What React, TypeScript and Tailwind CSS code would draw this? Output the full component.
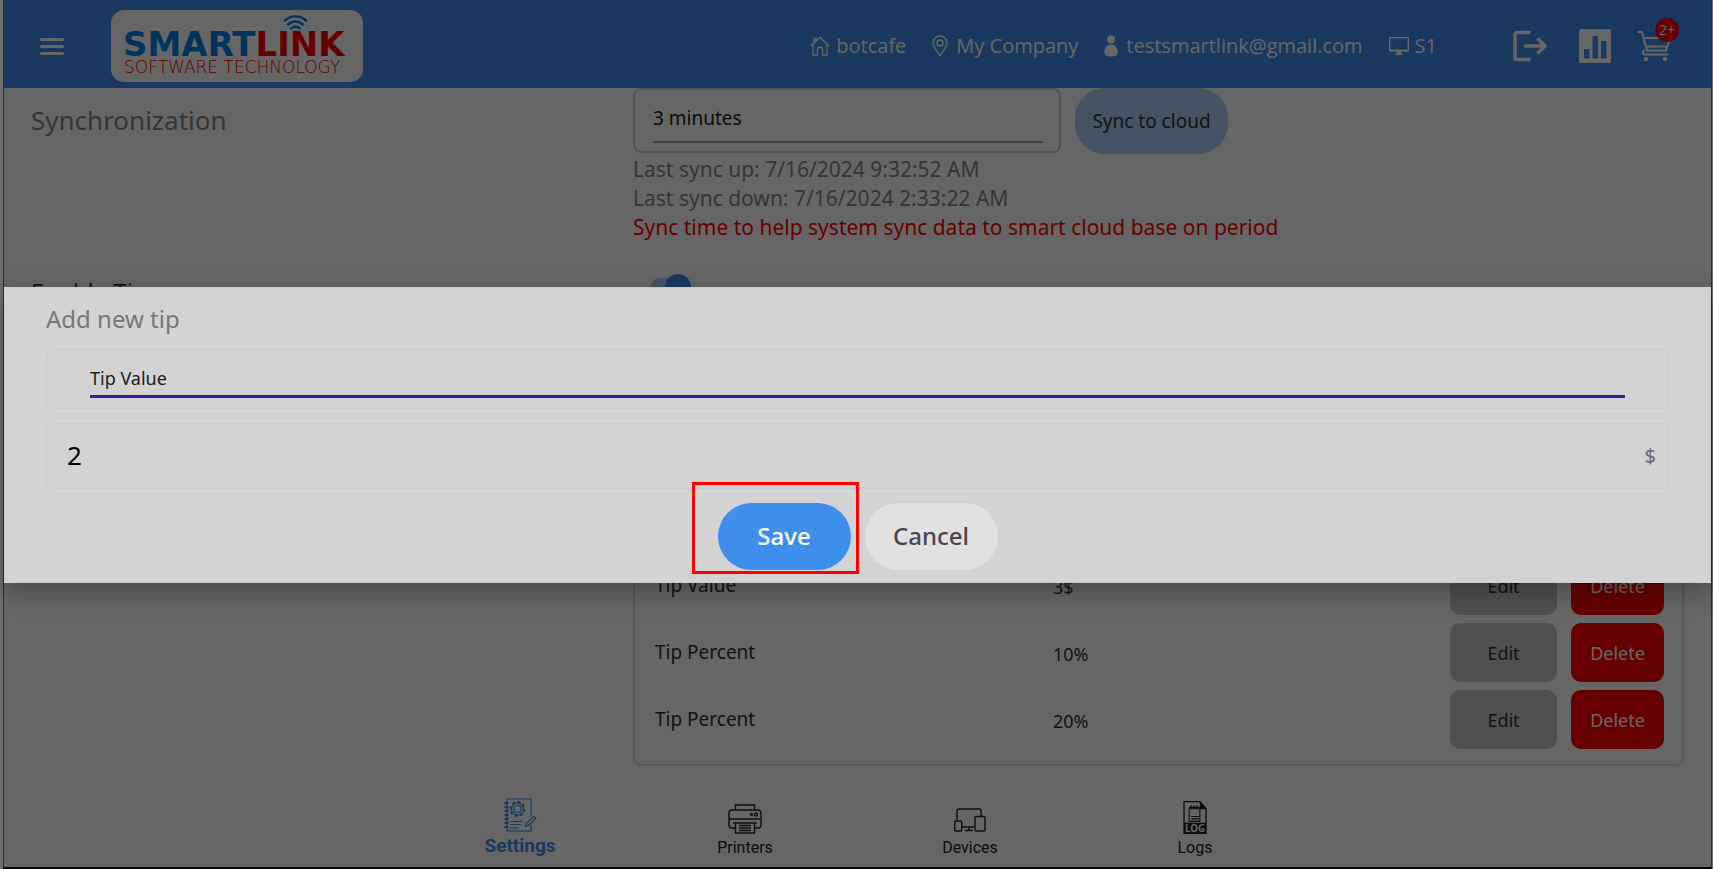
import React, { useState } from "react";

const tips = [
  { id: 1, type: "Tip Value", amount: "3$" },
  { id: 2, type: "Tip Percent", amount: "10%" },
  { id: 3, type: "Tip Percent", amount: "20%" },
];

const Logo = () => (
  <svg width="252" height="72" viewBox="0 0 252 72" role="img" aria-label="Smartlink Software Technology">
    <rect width="252" height="72" rx="13" fill="#fff" />
    <g fill="none" stroke="#0083e6" strokeWidth="2.4" strokeLinecap="round">
      <path d="M174 10.500c6-5.500 15-5.500 21 0" />
      <path d="M177 14.500c4.500-4 10.500-4 15 0" />
      <path d="M180 18.500c2.500-2.300 6.500-2.300 9 0" />
    </g>
    <text x="12" y="46" fontFamily="DejaVu Sans, sans-serif" fontWeight="700" fontSize="34" fill="#0083e6">
      SMART<tspan fill="#f00">LINK</tspan>
    </text>
    <text x="13" y="63" fontFamily="DejaVu Sans, sans-serif" fontWeight="200" fontSize="17" fill="#f00000">
      SOFTWARE TECHNOLOGY
    </text>
  </svg>
);

const HomeIcon = () => (
  <svg width="20" height="20" viewBox="0 0 20 20" fill="none" stroke="currentColor" strokeWidth="1.3">
    <path d="M.7 10 10 1.500l9.300 8.500M4 7V2.500h2V5M3 8.500V19h4.500v-5.500c0-3 5-3 5 0V19H17V8.500" />
  </svg>
);

const PinIcon = () => (
  <svg width="16" height="22" viewBox="0 0 16 22" fill="none" stroke="currentColor" strokeWidth="1.4">
    <path d="M8 20.500C4 15 1 11.500 1 8a7 7 0 0 1 14 0c0 3.500-3 7-7 12.500z" />
    <circle cx="8" cy="8" r="3" />
  </svg>
);

const PersonIcon = () => (
  <svg width="14" height="22" viewBox="0 0 14 22" fill="currentColor">
    <circle cx="7" cy="4.500" r="4" />
    <path d="M7 9.500c4 0 6.800 3.500 6.800 7.500 0 3-2.500 4.500-6.800 4.500S.2 20 .2 17C.2 13 3 9.500 7 9.500z" />
  </svg>
);

const MonitorIcon = () => (
  <svg width="20" height="20" viewBox="0 0 20 20">
    <path d="M.7 1.700h18.600v13H.7z" fill="none" stroke="currentColor" strokeWidth="1.300" />
    <path d="M1 13.500h18v2H1zM7.500 15h5v2.500l2 1.500h-9l2-1.500z" fill="currentColor" />
  </svg>
);

const LogoutIcon = () => (
  <svg width="34" height="32" viewBox="0 0 34 32" fill="none" stroke="currentColor" strokeWidth="3.500">
    <path d="M17.500 2.500H4a2 2 0 0 0-2 2v23a2 2 0 0 0 2 2h13.500M11 16h21M24.500 8.500 32 16l-7.500 7.500" />
  </svg>
);

const ChartIcon = () => (
  <svg width="32" height="34" viewBox="0 0 32 34">
    <rect width="32" height="34" rx="2" fill="currentColor" />
    <path d="M5 20h5.500v9.500H5zM13.500 7h5.500v22.500h-5.500zM22 12h5.500v17.500H22z" fill="#408eef" />
  </svg>
);

const CartIcon = () => (
  <svg width="34" height="32" viewBox="0 0 34 32" fill="none" stroke="currentColor" strokeWidth="2">
    <path d="M.5 2H5l5 18.500h19L33 8H6.500M9 16.500h20.500M8 20.500c-3 0-2.500 4 0 4h23" />
    <circle cx="9" cy="29" r="2.300" fill="currentColor" stroke="none" />
    <circle cx="28" cy="29" r="2.300" fill="currentColor" stroke="none" />
  </svg>
);

const SettingsIcon = () => (
  <svg width="34" height="34" viewBox="0 0 34 34" fill="none" stroke="currentColor" strokeWidth="1.200">
    <path d="M28 19V1H4v32h24v-6" />
    <path d="M1.500 5h4M1.500 9h4M1.500 13h4M1.500 17h4M1.500 21h4M1.500 25h4M1.500 29h4" strokeWidth="1.800" />
    <circle cx="14.500" cy="11" r="3.500" />
    <circle cx="14.500" cy="11" r="6" />
    <circle cx="14.500" cy="11" r="7" strokeWidth="2" strokeDasharray="2.750 2.750" />
    <path d="M7 23.500h13M7 26.500h11M7 30h9M22.500 28.500l1-3.500 7.500-6.500 2 2-7.500 7z" />
  </svg>
);

const PrinterIcon = () => (
  <svg width="34" height="30" viewBox="0 0 34 30" fill="none" stroke="currentColor" strokeWidth="1.400">
    <path d="M7.500 6V1h19v5M7.500 24H4a3 3 0 0 1-3-3V9a3 3 0 0 1 3-3h26a3 3 0 0 1 3 3v12a3 3 0 0 1-3 3h-3.500M1 15h32M5 19h24M7.500 19v10h19V19M11 21.500h12M11 24h12M11 26.500h12" />
    <circle cx="28" cy="10.500" r="1.500" />
    <path d="M22 10.500h3" strokeWidth="2.400" />
  </svg>
);

const DevicesIcon = () => (
  <svg width="32" height="26" viewBox="0 0 32 26" fill="none" stroke="currentColor" strokeWidth="1.400">
    <path d="M3 12V3a2 2 0 0 1 2-2h20a2 2 0 0 1 2 2v5M8 19h13M11 22.500h8M15 19v3.500" />
    <rect x=".7" y="13" width="7" height="10" rx="1" />
    <rect x="21" y="8.500" width="10" height="14.500" rx="1.500" />
  </svg>
);

const LogsIcon = () => (
  <svg width="24" height="33" viewBox="0 0 24 34">
    <path d="M.7 23V.7H17l6.300 7V23" fill="none" stroke="currentColor" strokeWidth="1.400" />
    <path d="M17 0v8.500h7zM0 22.500h24V34H0z" fill="currentColor" />
    <path d="M6 8h11v13H6zM6 6.500h11M8 4.500v3M11 4.500v3M14 4.500v3M8 16h8M8 18.500h8" fill="none" stroke="currentColor" strokeWidth="1.200" />
    <text x="12" y="32" textAnchor="middle" fontFamily="Open Sans, sans-serif" fontWeight="700" fontSize="10" fill="#fff">LOG</text>
  </svg>
);

const tabs = [
  { name: "Settings", icon: SettingsIcon },
  { name: "Printers", icon: PrinterIcon },
  { name: "Devices", icon: DevicesIcon },
  { name: "Logs", icon: LogsIcon },
];

const Header = () => (
  <header className="flex h-[88px] shrink-0 items-center bg-[#408eef] pt-1 pr-10 pl-9 font-['Open_Sans',sans-serif] text-xl text-white">
    <button aria-label="Menu" className="mr-[47px] flex w-6 flex-col gap-1">
      <span className="h-[3px] w-full rounded-sm bg-white" />
      <span className="h-[3px] w-full rounded-sm bg-white" />
      <span className="h-[3px] w-full rounded-sm bg-white" />
    </button>
    <Logo />
    <div className="ml-auto flex items-center gap-[26px]">
      <span className="flex items-center gap-1.5"><HomeIcon />botcafe</span>
      <span className="flex items-center gap-2"><PinIcon />My Company</span>
      <span className="flex items-center gap-2"><PersonIcon />testsmartlink@gmail.com</span>
      <span className="flex items-center gap-1.5"><MonitorIcon />S1</span>
    </div>
    <div className="ml-[76px] flex items-center gap-[26px]">
      <button aria-label="Log out" className="mr-1.5"><LogoutIcon /></button>
      <button aria-label="Reports"><ChartIcon /></button>
      <button aria-label="Cart" className="relative">
        <CartIcon />
        <span className="absolute -top-3 -right-2 flex size-6 items-center justify-center rounded-full bg-[#ff0000] text-sm">2+</span>
      </button>
    </div>
  </header>
);

const TipDialog = () => {
  const [value, setValue] = useState("2");

  return (
    <div className="absolute inset-0 flex items-center bg-black/60 pt-0.5">
      <div role="dialog" aria-labelledby="tip-title" className="w-full bg-[#d3d3d3] shadow-[0_8px_24px_rgba(0,0,0,0.3)]">
        <div className="rounded-lg border border-[#cccccc] px-[41px] pt-3 pb-3">
          <h2 id="tip-title" className="text-2xl leading-[38px] text-[#777777]">Add new tip</h2>
          <div className="mt-[11px] rounded-lg border border-[#c9c9c9] px-[43px] pt-3 pb-2.5">
            <select aria-label="Tip type" className="block h-9 w-full appearance-none border-b-[3px] border-[#3a1c9e] text-lg text-[#1c1c1c] outline-none">
              <option>Tip Value</option>
              <option>Tip Percent</option>
            </select>
          </div>
          <div className="mt-3.5 flex h-[66px] items-center rounded-lg border border-[#c9c9c9] pr-3 pl-5">
            <input
              aria-label="Amount"
              value={value}
              onChange={(e) => setValue(e.target.value)}
              className="min-w-0 flex-1 text-[26px] text-black outline-none"
            />
            <span className="text-xl text-[#6b6b6b]">$</span>
          </div>
          <div className="mt-3.5 flex justify-center gap-3.5">
            <div className="relative">
              <button className="h-[67px] w-[133px] rounded-[34px] bg-[#3e8eed] text-2xl font-medium text-white">Save</button>
              <div className="pointer-events-none absolute -top-[21px] -right-2 -bottom-1 -left-[26px] border-[3px] border-[#ff0000]" />
            </div>
            <button className="h-[67px] w-[133px] rounded-[34px] bg-[#e1e1e1] text-2xl font-medium text-[#49454f]">Cancel</button>
          </div>
        </div>
      </div>
    </div>
  );
};

const App = () => {
  return (
    <div className="bg-[#6e6e6e] pr-px pl-[3px] font-['Noto_Sans',sans-serif]">
      <div className="relative flex min-h-screen flex-col border-x border-b-2 border-x-[#2b2b2b] border-b-black bg-white">
        <Header />

        <main className="pr-[27px] pl-[27px]">
          <section className="grid grid-cols-[602px_1fr]">
            <h2 className="pt-3.5 text-[26px] leading-9 text-[#888888]">Synchronization</h2>
            <div>
              <div className="mb-px flex items-start gap-3.5">
                <div className="h-[65px] w-[428px] rounded-lg border-2 border-[#d0d0d0] pt-1.5 pr-4 pl-[18px]">
                  <select aria-label="Sync period" className="block h-[47px] w-full appearance-none border-b-2 border-[#a0a0a0] text-[19px] text-[#222222]">
                    <option>3 minutes</option>
                  </select>
                </div>
                <button className="h-[66px] w-[153px] rounded-[30px] bg-[#accffa] text-[19px] text-[#333333]">Sync to cloud</button>
              </div>
              <p className="text-[21px] leading-[29px] text-[#888888]">Last sync up: 7/16/2024 9:32:52 AM</p>
              <p className="text-[21px] leading-[29px] text-[#888888]">Last sync down: 7/16/2024 2:33:22 AM</p>
              <p className="text-[21px] leading-[29px] text-[#ff0000]">Sync time to help system sync data to smart cloud base on period</p>
            </div>
          </section>

          <section className="mt-8 grid grid-cols-[602px_1fr]">
            <h2 className="pt-0.5 text-2xl leading-8 text-[#444444]">Enable Tip</h2>
            <label className="relative ml-[18px] block h-[26px] w-10">
              <input type="checkbox" role="switch" aria-label="Enable tip" defaultChecked className="peer sr-only" />
              <span className="absolute inset-x-0 top-1 h-[18px] rounded-full bg-[#accffa]" />
              <span className="absolute top-0 right-0 size-[26px] rounded-full bg-[#408eef]" />
            </label>
            <div className="col-start-2 mt-[232px] rounded-lg border-2 border-[#e0e0e0] pt-3.5 pr-[18px] pb-[7px] pl-5">
              <table className="w-full text-left text-[19px] text-[#333333]">
                <tbody>
                  {tips.map((tip) => (
                    <tr key={tip.id}>
                      <td className="w-[398px] pb-2">{tip.type}</td>
                      <td className="pb-1.5 text-lg">{tip.amount}</td>
                      <td className="w-[214px] pb-2">
                        <div className="flex gap-3.5 text-lg">
                          <button className="h-[59px] w-[107px] rounded-[10px] bg-[#c8c8c8] text-[#333333]">Edit</button>
                          <button className="h-[59px] w-[93px] rounded-[10px] bg-[#ff0000] text-white">Delete</button>
                        </div>
                      </td>
                    </tr>
                  ))}
                </tbody>
              </table>
            </div>
          </section>
        </main>

        <nav className="mt-auto flex justify-center pb-[7px] font-[Roboto,sans-serif]">
          {tabs.map(({ name, icon: Icon }) => (
            <a
              key={name}
              href="#"
              className={`flex w-[225px] flex-col items-center justify-end ${
                name === "Settings" ? "text-[19px] font-bold text-[#408eef]" : "gap-0.5 text-base text-[#222222]"
              }`}
            >
              <Icon />
              {name}
            </a>
          ))}
        </nav>

        <TipDialog />
      </div>
    </div>
  );
};

export default App;
